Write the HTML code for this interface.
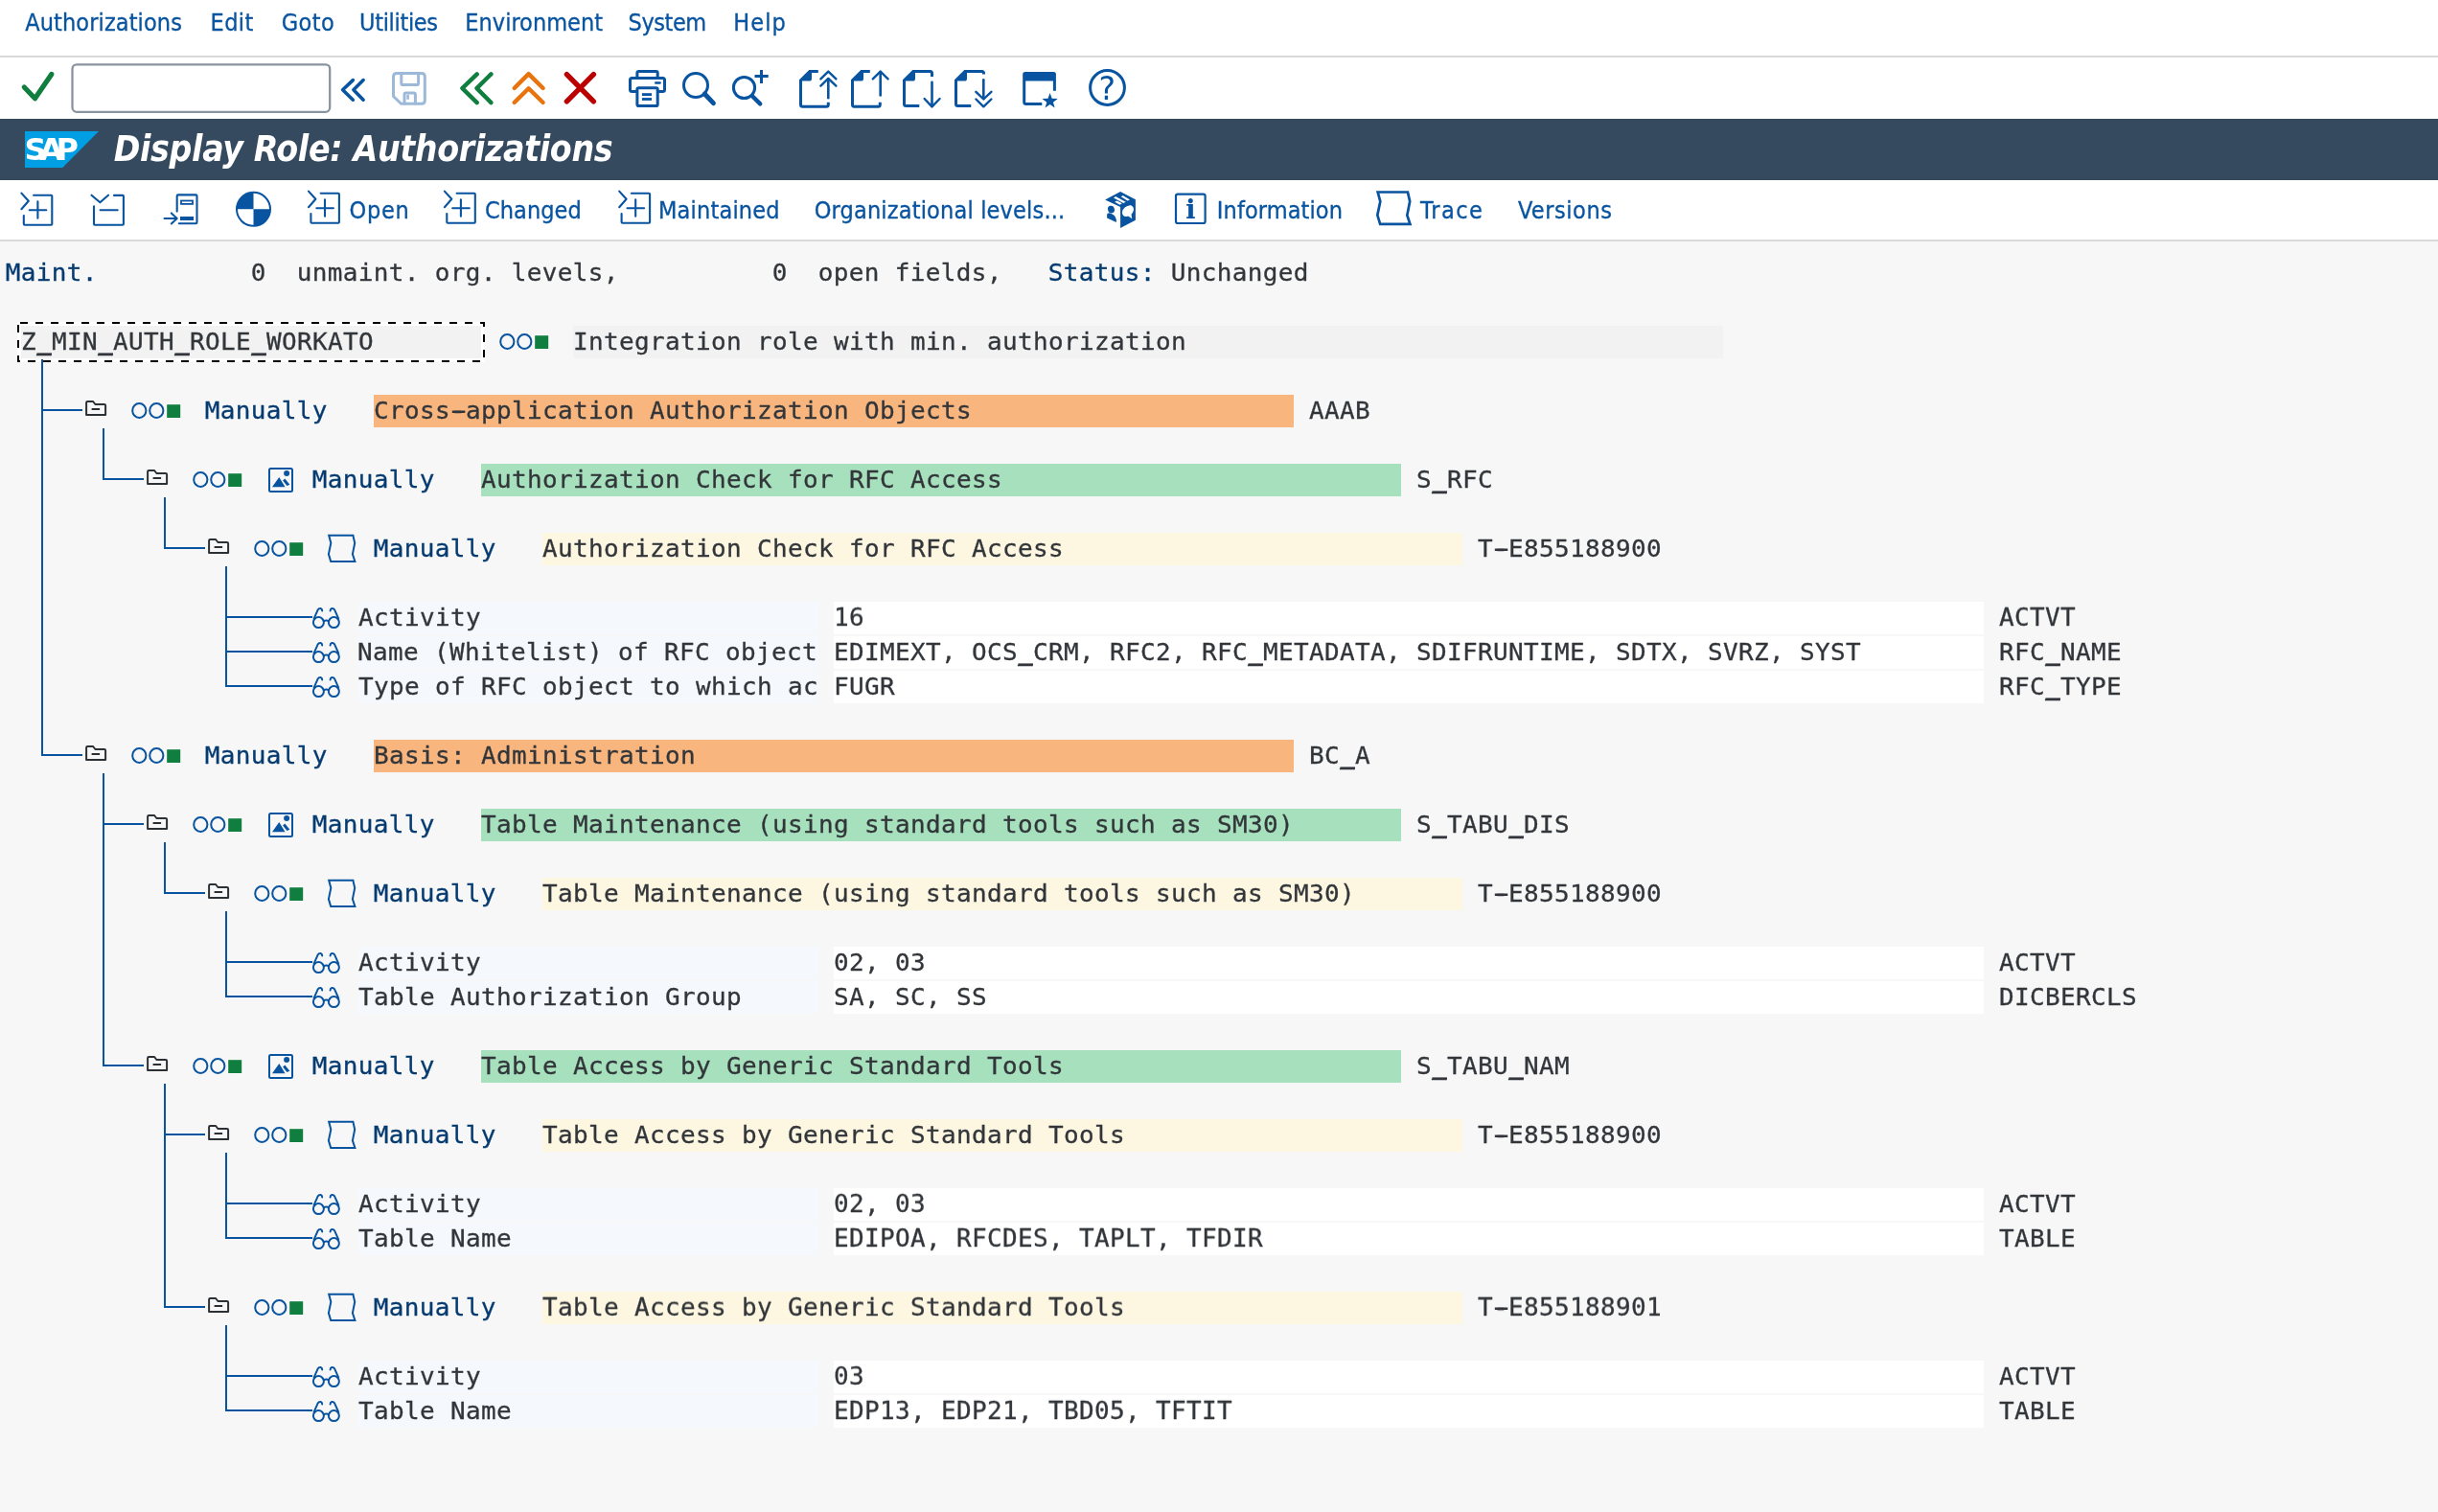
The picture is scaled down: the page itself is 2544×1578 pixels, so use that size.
<!DOCTYPE html>
<html lang="en"><head><meta charset="utf-8"><title>Display Role: Authorizations</title>
<style>
html,body{margin:0;padding:0}
body{width:2544px;height:1578px;overflow:hidden;background:#f7f7f7;position:relative;
 font-family:"DejaVu Sans Condensed","DejaVu Sans","Liberation Sans",sans-serif;}
.abs{position:absolute}
.ui{position:absolute;font-size:25px;line-height:30px;color:#0854a0;white-space:pre;-webkit-text-stroke:0.3px #0854a0}
.m{position:absolute;font-family:"DejaVu Sans Mono","Liberation Mono",monospace;font-size:26px;line-height:36px;height:36px;color:#32363a;white-space:pre;letter-spacing:0.3467px;transform-origin:0 27.2px;transform:translateY(-1px) scaleY(0.96);-webkit-text-stroke:0.3px}
.us{font-weight:bold;position:relative;top:-0.7px}
.hy{display:inline-block;transform:translate(0.4px,-0.9px) scale(1.92,1)}
.nv{color:#053b70}
.f{position:absolute;height:34px}
.ln{position:absolute;background:#0854a0}
svg{position:absolute;overflow:visible}
</style></head><body><div id="app" style="position:absolute;left:0;top:0;width:2544px;height:1578px;will-change:transform">

<div class="abs" style="left:0;top:0;width:2544px;height:58px;background:#fff"></div>
<div class="abs" style="left:0;top:58px;width:2544px;height:2px;background:#d9d9d9"></div>
<div class="ui" style="left:26.2px;top:9px;letter-spacing:0.108px">Authorizations</div>
<div class="ui" style="left:219.5px;top:9px;letter-spacing:0.433px">Edit</div>
<div class="ui" style="left:293.7px;top:9px;letter-spacing:0.467px">Goto</div>
<div class="ui" style="left:375px;top:9px;letter-spacing:-0.325px">Utilities</div>
<div class="ui" style="left:485.3px;top:9px;letter-spacing:0.02px">Environment</div>
<div class="ui" style="left:655.6px;top:9px;letter-spacing:-0.44px">System</div>
<div class="ui" style="left:765.3px;top:9px;letter-spacing:1.067px">Help</div>
<div class="abs" style="left:0;top:60px;width:2544px;height:64px;background:#fff"></div>
<svg style="left:70px;top:62px" width="280" height="60" viewBox="70 62 280 60"><rect x="75.5" y="67.3" width="268.7" height="49.5" rx="4.5" fill="#fff" stroke="#8a94a0" stroke-width="2.3"/></svg>
<svg style="left:0;top:60px" width="1300" height="64" viewBox="0 60 1300 64"><path d="M25.3 91 L36.5 102.8 L53.8 77.5" fill="none" stroke="#107e3e" stroke-width="5.2" stroke-linecap="round" stroke-linejoin="round"/><path d="M368.3 83.6 L357.6 93.8 L368.3 104.2 M379.1 83.6 L368.9 93.8 L379.1 104.2" fill="none" stroke="#0854a0" stroke-width="3.6" stroke-linecap="round" stroke-linejoin="round"/><path d="M414 76.5 H440 Q443.3 76.5 443.3 79.8 V105 Q443.3 108.3 440 108.3 H418.5 L410.5 100.5 V80 Q410.5 76.5 414 76.5 Z" fill="none" stroke="#9db9da" stroke-width="3" stroke-linecap="round" stroke-linejoin="round"/><path d="M418.8 77 V87 Q418.8 88.6 420.4 88.6 H435 Q436.6 88.6 436.6 87 V77" fill="none" stroke="#9db9da" stroke-width="3" stroke-linecap="round" stroke-linejoin="round"/><path d="M422 108 V98.5 Q422 96.9 423.6 96.9 H431.8 Q433.4 96.9 433.4 98.5 V108" fill="none" stroke="#9db9da" stroke-width="3" stroke-linecap="round" stroke-linejoin="round"/><rect x="424.3" y="98.8" width="2.6" height="5" fill="#9db9da"/><path d="M497.7 77.4 L482.4 92.1 L497.7 107.1 M512.4 77.4 L497.5 92.1 L512.4 107.1" fill="none" stroke="#107e3e" stroke-width="4.4" stroke-linecap="round" stroke-linejoin="round"/><path d="M536.7 92 L551.6 77.1 L566.6 92 M536.7 107 L551.6 92.3 L566.6 107" fill="none" stroke="#e9730c" stroke-width="4.4" stroke-linecap="round" stroke-linejoin="round"/><path d="M591.4 77.6 L619.4 105.9 M619.4 77.6 L591.4 105.9" fill="none" stroke="#bb0000" stroke-width="5.4" stroke-linecap="round" stroke-linejoin="round"/><path d="M664.9 80 V76 Q664.9 74.4 666.5 74.4 H684.6 Q686.2 74.4 686.2 76 V80" fill="none" stroke="#0854a0" stroke-width="3" stroke-linecap="round" stroke-linejoin="round"/><path d="M663.4 95.5 H659.5 Q657.5 95.5 657.5 93.5 V83.5 Q657.5 81.5 659.5 81.5 H691.5 Q693.5 81.5 693.5 83.5 V93.5 Q693.5 95.5 691.5 95.5 H687.7" fill="none" stroke="#0854a0" stroke-width="3" stroke-linecap="round" stroke-linejoin="round"/><path d="M666.5 91.7 H684.6 Q686.2 91.7 686.2 93.3 V108.9 Q686.2 110.5 684.6 110.5 H666.5 Q664.9 110.5 664.9 108.9 V93.3 Q664.9 91.7 666.5 91.7 Z" fill="none" stroke="#0854a0" stroke-width="3" stroke-linecap="round" stroke-linejoin="round"/><rect x="669.9" y="97.2" width="10.1" height="2.8" fill="#0854a0"/><rect x="669.9" y="102.1" width="10.1" height="2.8" fill="#0854a0"/><rect x="683" y="85.2" width="6.8" height="2.5" rx="1.2" fill="#0854a0"/><circle cx="726" cy="89" r="12.5" fill="none" stroke="#0854a0" stroke-width="3"/><path d="M735.3 98 L744.4 107.6" fill="none" stroke="#0854a0" stroke-width="5" stroke-linecap="round" stroke-linejoin="round"/><circle cx="776.5" cy="91.5" r="11.1" fill="none" stroke="#0854a0" stroke-width="3"/><path d="M785 100.2 L793.2 108.4" fill="none" stroke="#0854a0" stroke-width="4.4" stroke-linecap="round" stroke-linejoin="round"/><path d="M787.5 79.5 H801.7 M794.5 73 V86.9" fill="none" stroke="#0854a0" stroke-width="3" stroke-linecap="butt" stroke-linejoin="round"/><path d="M834 83.3 L844.3 72.9 H847 V82 Q847 84.6 844.4 84.6 H834 Z" fill="#0854a0"/><path d="M844 74.4 H853.8 M835.5 83 V109.3 Q835.5 111.3 837.5 111.3 H862.3 Q864.3 111.3 864.3 109.3 V106.8" fill="none" stroke="#0854a0" stroke-width="3" stroke-linecap="butt" stroke-linejoin="round"/><path d="M864.3 82.5 V102.2" fill="none" stroke="#0854a0" stroke-width="2.6" stroke-linecap="round" stroke-linejoin="round"/><path d="M856.4 82.4 L864.3 74.6 L872.4 82.4 M856.4 89.7 L864.3 81.9 L872.4 89.7" fill="none" stroke="#0854a0" stroke-width="2.4" stroke-linecap="round" stroke-linejoin="round"/><path d="M888 83.3 L898.3 72.9 H901 V82 Q901 84.6 898.4 84.6 H888 Z" fill="#0854a0"/><path d="M898 74.4 H907.8 M889.5 83 V109.3 Q889.5 111.3 891.5 111.3 H916.3 Q918.3 111.3 918.3 109.3 V106.8" fill="none" stroke="#0854a0" stroke-width="3" stroke-linecap="butt" stroke-linejoin="round"/><path d="M918.7 75 V99.5" fill="none" stroke="#0854a0" stroke-width="2.6" stroke-linecap="round" stroke-linejoin="round"/><path d="M910.8 82.4 L918.7 74.6 L926.6 82.4" fill="none" stroke="#0854a0" stroke-width="2.4" stroke-linecap="round" stroke-linejoin="round"/><path d="M942 83.3 L952.3 72.9 H955 V82 Q955 84.6 952.4 84.6 H942 Z" fill="#0854a0"/><path d="M952 74.4 H970.5 Q972.5 74.4 972.5 76.4 V80" fill="none" stroke="#0854a0" stroke-width="3" stroke-linecap="butt" stroke-linejoin="round"/><path d="M943.5 83 V108.5 Q943.5 110.5 945.5 110.5 H959.3" fill="none" stroke="#0854a0" stroke-width="3" stroke-linecap="butt" stroke-linejoin="round"/><path d="M972.5 85.8 V111" fill="none" stroke="#0854a0" stroke-width="2.6" stroke-linecap="round" stroke-linejoin="round"/><path d="M964.6 103 L972.5 111.3 L980.6 103" fill="none" stroke="#0854a0" stroke-width="2.4" stroke-linecap="round" stroke-linejoin="round"/><path d="M996 83.3 L1006.3 72.9 H1009 V82 Q1009 84.6 1006.4 84.6 H996 Z" fill="#0854a0"/><path d="M1006 74.4 H1024.5 Q1026.5 74.4 1026.5 76.4 V77.6" fill="none" stroke="#0854a0" stroke-width="3" stroke-linecap="butt" stroke-linejoin="round"/><path d="M997.5 83 V108.5 Q997.5 110.5 999.5 110.5 H1013.3" fill="none" stroke="#0854a0" stroke-width="3" stroke-linecap="butt" stroke-linejoin="round"/><path d="M1026.3 83.3 V103" fill="none" stroke="#0854a0" stroke-width="2.6" stroke-linecap="round" stroke-linejoin="round"/><path d="M1018.4 95.8 L1026.3 103.5 L1034.4 95.8 M1018.4 103.5 L1026.3 111.3 L1034.4 103.5" fill="none" stroke="#0854a0" stroke-width="2.4" stroke-linecap="round" stroke-linejoin="round"/><path d="M1067.2 77.5 Q1067.2 75 1069.7 75 H1099.4 Q1101.9 75 1101.9 77.5 V84.5 H1067.2 Z" fill="#0854a0"/><path d="M1068.7 84 V106.4 Q1068.7 108.4 1070.7 108.4 H1087.3 M1100.4 84 V94.8" fill="none" stroke="#0854a0" stroke-width="3" stroke-linecap="butt" stroke-linejoin="round"/><polygon points="1095.60,97.00 1097.66,102.77 1103.78,102.94 1098.93,106.68 1100.65,112.56 1095.60,109.10 1090.55,112.56 1092.27,106.68 1087.42,102.94 1093.54,102.77" fill="#0854a0"/><circle cx="1155.5" cy="91.5" r="17.9" fill="none" stroke="#0854a0" stroke-width="3"/><text x="1155.3" y="103.6" text-anchor="middle" font-family="DejaVu Sans,Liberation Sans,sans-serif" font-size="33" fill="#0854a0">?</text></svg>
<div class="abs" style="left:0;top:124px;width:2544px;height:64px;background:#354a5f"></div>
<svg style="left:26px;top:137px" width="78" height="38" viewBox="0 0 78 38"><polygon points="0,0 77,0 39.3,38 0,38" fill="#009fe3"/><text x="-0.6" y="29.9" font-family="DejaVu Sans,Liberation Sans,sans-serif" font-weight="bold" font-size="32" fill="#fff" letter-spacing="-7.3">SAP</text></svg>
<div class="abs" style="left:118.7px;top:124px;height:64px;line-height:63px;font-size:37px;font-weight:bold;font-style:italic;color:#fff;white-space:pre;letter-spacing:-0.32px">Display Role: Authorizations</div>
<div class="abs" style="left:0;top:188px;width:2544px;height:62px;background:#fff"></div>
<div class="abs" style="left:0;top:250px;width:2544px;height:2px;background:#d9d9d9"></div>
<svg style="left:0;top:187px" width="1700" height="63" viewBox="0 187 1700 63"><path d="M22.4 201.6 L29.8 209.8 L22.4 218.2" fill="none" stroke="#0854a0" stroke-width="2.1" stroke-linecap="round" stroke-linejoin="round"/><path d="M35.1 203.7 H53.3 Q54.3 203.7 54.3 204.7 V233.8 Q54.3 234.8 53.3 234.8 H25.8 Q24.8 234.8 24.8 233.8 V225" fill="none" stroke="#0854a0" stroke-width="2.1" stroke-linecap="round" stroke-linejoin="round"/><path d="M30.7 219.2 H48.3 M39.4 210.2 V227.8" fill="none" stroke="#0854a0" stroke-width="2.1" stroke-linecap="round" stroke-linejoin="round"/><path d="M95.5 203.7 L104.4 211.3 L113 203.7" fill="none" stroke="#0854a0" stroke-width="2.1" stroke-linecap="round" stroke-linejoin="round"/><path d="M119 203.9 H127.9 Q128.9 203.9 128.9 204.9 V233.8 Q128.9 234.8 127.9 234.8 H99 Q98 234.8 98 233.8 V215.4" fill="none" stroke="#0854a0" stroke-width="2.1" stroke-linecap="round" stroke-linejoin="round"/><path d="M104.6 219.2 H122.7" fill="none" stroke="#0854a0" stroke-width="2.1" stroke-linecap="round" stroke-linejoin="round"/><path d="M184.7 220.6 V204.6 Q184.7 203.4 185.9 203.4 H204.3 Q205.5 203.4 205.5 204.6 V232.1 Q205.5 233.3 204.3 233.3 H186.8" fill="none" stroke="#0854a0" stroke-width="2.1" stroke-linecap="round" stroke-linejoin="round"/><rect x="189" y="209.5" width="12" height="3.4" fill="none" stroke="#0854a0" stroke-width="1.8"/><rect x="188" y="226" width="14" height="4" fill="#0854a0"/><path d="M171.5 227.9 H184 M178.8 222.4 L184.7 227.9 L178.8 233.5" fill="none" stroke="#0854a0" stroke-width="2" stroke-linecap="round" stroke-linejoin="round"/><circle cx="264.5" cy="218.3" r="17.5" fill="#fff" stroke="#0854a0" stroke-width="2"/><path d="M264.5 218.3 V200.8 A17.5 17.5 0 0 0 247 218.3 Z M264.5 218.3 V235.8 A17.5 17.5 0 0 0 282 218.3 Z" fill="#0854a0"/><path d="M322.0 199.6 L329.40000000000003 207.8 L322.0 216.2" fill="none" stroke="#0854a0" stroke-width="2.1" stroke-linecap="round" stroke-linejoin="round"/><path d="M334.70000000000005 201.7 H352.90000000000003 Q353.90000000000003 201.7 353.90000000000003 202.7 V231.8 Q353.90000000000003 232.8 352.90000000000003 232.8 H325.40000000000003 Q324.40000000000003 232.8 324.40000000000003 231.8 V223" fill="none" stroke="#0854a0" stroke-width="2.1" stroke-linecap="round" stroke-linejoin="round"/><path d="M330.3 217.2 H347.90000000000003 M339.0 208.2 V225.8" fill="none" stroke="#0854a0" stroke-width="2.1" stroke-linecap="round" stroke-linejoin="round"/><path d="M463.9 199.6 L471.3 207.8 L463.9 216.2" fill="none" stroke="#0854a0" stroke-width="2.1" stroke-linecap="round" stroke-linejoin="round"/><path d="M476.6 201.7 H494.8 Q495.8 201.7 495.8 202.7 V231.8 Q495.8 232.8 494.8 232.8 H467.3 Q466.3 232.8 466.3 231.8 V223" fill="none" stroke="#0854a0" stroke-width="2.1" stroke-linecap="round" stroke-linejoin="round"/><path d="M472.2 217.2 H489.8 M480.9 208.2 V225.8" fill="none" stroke="#0854a0" stroke-width="2.1" stroke-linecap="round" stroke-linejoin="round"/><path d="M646.1999999999999 199.6 L653.5999999999999 207.8 L646.1999999999999 216.2" fill="none" stroke="#0854a0" stroke-width="2.1" stroke-linecap="round" stroke-linejoin="round"/><path d="M658.9 201.7 H677.0999999999999 Q678.0999999999999 201.7 678.0999999999999 202.7 V231.8 Q678.0999999999999 232.8 677.0999999999999 232.8 H649.5999999999999 Q648.5999999999999 232.8 648.5999999999999 231.8 V223" fill="none" stroke="#0854a0" stroke-width="2.1" stroke-linecap="round" stroke-linejoin="round"/><path d="M654.5 217.2 H672.0999999999999 M663.1999999999999 208.2 V225.8" fill="none" stroke="#0854a0" stroke-width="2.1" stroke-linecap="round" stroke-linejoin="round"/><polygon points="1153.1,208.5 1169.1,200.1 1184.9,208.2 1184.9,229.8 1169.1,238.1 1169.1,216.1" fill="#0854a0"/><polygon points="1171.8,203.9 1179,208.5 1176.6,209.6 1169.7,205.2" fill="#fff"/><polygon points="1164.1,205.1 1174.7,210.7 1172.3,211.9 1162,206.6" fill="#fff"/><polygon points="1165.6,209.5 1170.8,212.3 1168.5,213.8 1163.2,210.7" fill="#fff"/><ellipse cx="1177" cy="220.2" rx="6.8" ry="4.9" transform="rotate(-42 1177 220.2)" fill="#fff"/><polygon points="1177.2,225.6 1181.2,228.2 1180.3,222.6" fill="#fff"/><ellipse cx="1159.5" cy="218.6" rx="3.4" ry="3.9" transform="rotate(-15 1159.5 218.6)" fill="#0854a0"/><path d="M1155.1 224.2 Q1155.1 222.3 1157.3 222.3 L1160.2 223.3 Q1164.6 225.6 1164.9 230 V232.1 L1155.1 227.6 Z" fill="#0854a0"/><rect x="1227" y="202.6" width="30.6" height="30.4" rx="2" fill="none" stroke="#0854a0" stroke-width="2.2"/><text x="1242.3" y="228.3" text-anchor="middle" font-family="DejaVu Serif,Liberation Serif,serif" font-weight="bold" font-size="27" fill="#0854a0">i</text><path d="M1437.4 200.3 L1462.6 200.3 L1464.4 208.3 L1462.1 220.0 L1464.6 227.6 L1439.4 227.6 L1437.1 220.0 L1439.5 208.3 Z" fill="none" stroke="#0854a0" stroke-width="2.2" stroke-linecap="round" stroke-linejoin="miter" transform="translate(1436.2 199.3) scale(1.24 1.22) translate(-1436.2 -199.3)"/></svg>
<div class="ui" style="left:364.4px;top:205px;letter-spacing:0.8px">Open</div>
<div class="ui" style="left:505.9px;top:205px;letter-spacing:0.083px">Changed</div>
<div class="ui" style="left:687px;top:205px;letter-spacing:0.189px">Maintained</div>
<div class="ui" style="left:849.7px;top:205px;letter-spacing:0.17px">Organizational levels...</div>
<div class="ui" style="left:1269.8px;top:205px;letter-spacing:0.1px">Information</div>
<div class="ui" style="left:1481.9px;top:205px;letter-spacing:1.4px">Trace</div>
<div class="ui" style="left:1583.9px;top:205px;letter-spacing:0.543px">Versions</div>
<div class="m nv" style="left:5.8px;top:267px">Maint.</div>
<div class="m " style="left:261.8px;top:267px">0</div>
<div class="m " style="left:309.8px;top:267px">unmaint. org. levels,</div>
<div class="m " style="left:805.8px;top:267px">0</div>
<div class="m " style="left:853.8px;top:267px">open fields,</div>
<div class="m nv" style="left:1093.8px;top:267px">Status:</div>
<div class="m " style="left:1221.8px;top:267px">Unchanged</div>
<div class="abs" style="left:18px;top:336px;width:488px;height:42px;background:#fff"></div>
<div class="abs" style="left:22px;top:340px;width:480px;height:34px;background:#f2f2f2"></div>
<svg style="left:17px;top:335px" width="490" height="44" viewBox="17 335 490 44"><path d="M19 337 H505 V377" fill="none" stroke="#000" stroke-width="2" stroke-dasharray="8 8" stroke-dashoffset="14"/><path d="M19 337 V377 H505" fill="none" stroke="#000" stroke-width="2" stroke-dasharray="8 8" stroke-dashoffset="14"/></svg>
<div class="m " style="left:22.1px;top:339px">Z_MIN_AUTH_ROLE_WORKATO</div>
<div class="f" style="left:598px;top:340px;width:1200px;background:#f2f2f2"></div>
<div class="m " style="left:598.1px;top:339px">Integration role with min. authorization</div>
<div class="m nv" style="left:213.8px;top:411px">Manually</div>
<div class="f" style="left:390px;top:412px;width:960px;background:#f8b57d"></div>
<div class="m " style="left:390.1px;top:411px">Cross-application Authorization Objects</div>
<div class="m " style="left:1366.1px;top:411px">AAAB</div>
<div class="m nv" style="left:325.8px;top:483px">Manually</div>
<div class="f" style="left:502px;top:484px;width:960px;background:#a6e0bc"></div>
<div class="m " style="left:502.1px;top:483px">Authorization Check for RFC Access</div>
<div class="m " style="left:1478.1px;top:483px">S_RFC</div>
<div class="m nv" style="left:389.8px;top:555px">Manually</div>
<div class="f" style="left:566px;top:556px;width:960px;background:#fdf6e0"></div>
<div class="m " style="left:566.1px;top:555px">Authorization Check for RFC Access</div>
<div class="m " style="left:1542.1px;top:555px">T-E855188900</div>
<div class="f" style="left:374px;top:628px;width:480px;background:#f5f9fd"></div>
<div class="m " style="left:374.1px;top:627px">Activity</div>
<div class="f" style="left:870px;top:628px;width:1200px;background:#ffffff"></div>
<div class="m " style="left:870.1px;top:627px">16</div>
<div class="m " style="left:2086.1px;top:627px">ACTVT</div>
<div class="f" style="left:374px;top:664px;width:480px;background:#f5f9fd"></div>
<div class="m" style="left:373.1px;top:663px">Name (Whitelist) of RFC object</div>
<div class="f" style="left:870px;top:664px;width:1200px;background:#ffffff"></div>
<div class="m " style="left:870.1px;top:663px">EDIMEXT, OCS_CRM, RFC2, RFC_METADATA, SDIFRUNTIME, SDTX, SVRZ, SYST</div>
<div class="m " style="left:2086.1px;top:663px">RFC_NAME</div>
<div class="f" style="left:374px;top:700px;width:480px;background:#f5f9fd"></div>
<div class="m " style="left:374.1px;top:699px">Type of RFC object to which ac</div>
<div class="f" style="left:870px;top:700px;width:1200px;background:#ffffff"></div>
<div class="m " style="left:870.1px;top:699px">FUGR</div>
<div class="m " style="left:2086.1px;top:699px">RFC_TYPE</div>
<div class="m nv" style="left:213.8px;top:771px">Manually</div>
<div class="f" style="left:390px;top:772px;width:960px;background:#f8b57d"></div>
<div class="m " style="left:390.1px;top:771px">Basis: Administration</div>
<div class="m " style="left:1366.1px;top:771px">BC_A</div>
<div class="m nv" style="left:325.8px;top:843px">Manually</div>
<div class="f" style="left:502px;top:844px;width:960px;background:#a6e0bc"></div>
<div class="m " style="left:502.1px;top:843px">Table Maintenance (using standard tools such as SM30)</div>
<div class="m " style="left:1478.1px;top:843px">S_TABU_DIS</div>
<div class="m nv" style="left:389.8px;top:915px">Manually</div>
<div class="f" style="left:566px;top:916px;width:960px;background:#fdf6e0"></div>
<div class="m " style="left:566.1px;top:915px">Table Maintenance (using standard tools such as SM30)</div>
<div class="m " style="left:1542.1px;top:915px">T-E855188900</div>
<div class="f" style="left:374px;top:988px;width:480px;background:#f5f9fd"></div>
<div class="m " style="left:374.1px;top:987px">Activity</div>
<div class="f" style="left:870px;top:988px;width:1200px;background:#ffffff"></div>
<div class="m " style="left:870.1px;top:987px">02, 03</div>
<div class="m " style="left:2086.1px;top:987px">ACTVT</div>
<div class="f" style="left:374px;top:1024px;width:480px;background:#f5f9fd"></div>
<div class="m " style="left:374.1px;top:1023px">Table Authorization Group</div>
<div class="f" style="left:870px;top:1024px;width:1200px;background:#ffffff"></div>
<div class="m " style="left:870.1px;top:1023px">SA, SC, SS</div>
<div class="m " style="left:2086.1px;top:1023px">DICBERCLS</div>
<div class="m nv" style="left:325.8px;top:1095px">Manually</div>
<div class="f" style="left:502px;top:1096px;width:960px;background:#a6e0bc"></div>
<div class="m " style="left:502.1px;top:1095px">Table Access by Generic Standard Tools</div>
<div class="m " style="left:1478.1px;top:1095px">S_TABU_NAM</div>
<div class="m nv" style="left:389.8px;top:1167px">Manually</div>
<div class="f" style="left:566px;top:1168px;width:960px;background:#fdf6e0"></div>
<div class="m " style="left:566.1px;top:1167px">Table Access by Generic Standard Tools</div>
<div class="m " style="left:1542.1px;top:1167px">T-E855188900</div>
<div class="f" style="left:374px;top:1240px;width:480px;background:#f5f9fd"></div>
<div class="m " style="left:374.1px;top:1239px">Activity</div>
<div class="f" style="left:870px;top:1240px;width:1200px;background:#ffffff"></div>
<div class="m " style="left:870.1px;top:1239px">02, 03</div>
<div class="m " style="left:2086.1px;top:1239px">ACTVT</div>
<div class="f" style="left:374px;top:1276px;width:480px;background:#f5f9fd"></div>
<div class="m " style="left:374.1px;top:1275px">Table Name</div>
<div class="f" style="left:870px;top:1276px;width:1200px;background:#ffffff"></div>
<div class="m " style="left:870.1px;top:1275px">EDIPOA, RFCDES, TAPLT, TFDIR</div>
<div class="m " style="left:2086.1px;top:1275px">TABLE</div>
<div class="m nv" style="left:389.8px;top:1347px">Manually</div>
<div class="f" style="left:566px;top:1348px;width:960px;background:#fdf6e0"></div>
<div class="m " style="left:566.1px;top:1347px">Table Access by Generic Standard Tools</div>
<div class="m " style="left:1542.1px;top:1347px">T-E855188901</div>
<div class="f" style="left:374px;top:1420px;width:480px;background:#f5f9fd"></div>
<div class="m " style="left:374.1px;top:1419px">Activity</div>
<div class="f" style="left:870px;top:1420px;width:1200px;background:#ffffff"></div>
<div class="m " style="left:870.1px;top:1419px">03</div>
<div class="m " style="left:2086.1px;top:1419px">ACTVT</div>
<div class="f" style="left:374px;top:1456px;width:480px;background:#f5f9fd"></div>
<div class="m " style="left:374.1px;top:1455px">Table Name</div>
<div class="f" style="left:870px;top:1456px;width:1200px;background:#ffffff"></div>
<div class="m " style="left:870.1px;top:1455px">EDP13, EDP21, TBD05, TFTIT</div>
<div class="m " style="left:2086.1px;top:1455px">TABLE</div>
<div class="ln" style="left:235px;top:643px;width:91px;height:2px"></div>
<div class="ln" style="left:235px;top:679px;width:91px;height:2px"></div>
<div class="ln" style="left:235px;top:715px;width:91px;height:2px"></div>
<div class="ln" style="left:235px;top:1003px;width:91px;height:2px"></div>
<div class="ln" style="left:235px;top:1039px;width:91px;height:2px"></div>
<div class="ln" style="left:235px;top:1255px;width:91px;height:2px"></div>
<div class="ln" style="left:235px;top:1291px;width:91px;height:2px"></div>
<div class="ln" style="left:235px;top:1435px;width:91px;height:2px"></div>
<div class="ln" style="left:235px;top:1471px;width:91px;height:2px"></div>
<div class="ln" style="left:43px;top:375px;width:2px;height:414px"></div>
<div class="ln" style="left:43px;top:427px;width:43px;height:2px"></div>
<div class="ln" style="left:43px;top:787px;width:43px;height:2px"></div>
<div class="ln" style="left:107px;top:447px;width:2px;height:54px"></div>
<div class="ln" style="left:107px;top:499px;width:43px;height:2px"></div>
<div class="ln" style="left:171px;top:519px;width:2px;height:54px"></div>
<div class="ln" style="left:171px;top:571px;width:43px;height:2px"></div>
<div class="ln" style="left:235px;top:591px;width:2px;height:126px"></div>
<div class="ln" style="left:107px;top:807px;width:2px;height:306px"></div>
<div class="ln" style="left:107px;top:859px;width:43px;height:2px"></div>
<div class="ln" style="left:107px;top:1111px;width:43px;height:2px"></div>
<div class="ln" style="left:171px;top:879px;width:2px;height:54px"></div>
<div class="ln" style="left:171px;top:931px;width:43px;height:2px"></div>
<div class="ln" style="left:235px;top:951px;width:2px;height:90px"></div>
<div class="ln" style="left:171px;top:1131px;width:2px;height:234px"></div>
<div class="ln" style="left:171px;top:1183px;width:43px;height:2px"></div>
<div class="ln" style="left:171px;top:1363px;width:43px;height:2px"></div>
<div class="ln" style="left:235px;top:1203px;width:2px;height:90px"></div>
<div class="ln" style="left:235px;top:1383px;width:2px;height:90px"></div>
<svg style="left:0;top:252px" width="700" height="1326" viewBox="0 252 700 1326"><ellipse cx="529.3000000000001" cy="356.5" rx="7.1" ry="7.4" fill="none" stroke="#0854a0" stroke-width="2"/><ellipse cx="547.3000000000001" cy="356.5" rx="7.1" ry="7.4" fill="none" stroke="#0854a0" stroke-width="2"/><rect x="557.5" y="349.5" width="15.4" height="15.2" fill="#fbfbfb"/><rect x="558.2" y="350.2" width="14" height="13.8" fill="#107e3e"/><path d="M90.1 433 V420.2 Q90.1 419 91.3 419 H97.1 L99.39999999999999 422 H108.89999999999999 Q110.1 422 110.1 423.2 V433 Z" fill="none" stroke="#2b3035" stroke-width="2" stroke-linecap="round" stroke-linejoin="round"/><rect x="95.6" y="426" width="8.5" height="2" fill="#2b3035"/><ellipse cx="145.29999999999998" cy="428.5" rx="7.1" ry="7.4" fill="none" stroke="#0854a0" stroke-width="2"/><ellipse cx="163.29999999999998" cy="428.5" rx="7.1" ry="7.4" fill="none" stroke="#0854a0" stroke-width="2"/><rect x="173.5" y="421.5" width="15.4" height="15.2" fill="#fbfbfb"/><rect x="174.2" y="422.2" width="14" height="13.8" fill="#107e3e"/><path d="M154.1 505 V492.2 Q154.1 491 155.29999999999998 491 H161.1 L163.4 494 H172.9 Q174.1 494 174.1 495.2 V505 Z" fill="none" stroke="#2b3035" stroke-width="2" stroke-linecap="round" stroke-linejoin="round"/><rect x="159.6" y="498" width="8.5" height="2" fill="#2b3035"/><ellipse cx="209.29999999999998" cy="500.5" rx="7.1" ry="7.4" fill="none" stroke="#0854a0" stroke-width="2"/><ellipse cx="227.29999999999998" cy="500.5" rx="7.1" ry="7.4" fill="none" stroke="#0854a0" stroke-width="2"/><rect x="237.5" y="493.5" width="15.4" height="15.2" fill="#fbfbfb"/><rect x="238.2" y="494.2" width="14" height="13.8" fill="#107e3e"/><rect x="281.0" y="489" width="24" height="24" rx="1.5" fill="none" stroke="#0854a0" stroke-width="2"/><circle cx="299.1" cy="493.9" r="3" fill="#0854a0"/><polygon points="291.3,498 284.0,508.2 297.5,508.2" fill="#0854a0"/><polygon points="295.1,501.6 297.3,499.5 302.4,505.8 299.4,506.9" fill="#0854a0"/><path d="M218.1 577 V564.2 Q218.1 563 219.29999999999998 563 H225.1 L227.4 566 H236.9 Q238.1 566 238.1 567.2 V577 Z" fill="none" stroke="#2b3035" stroke-width="2" stroke-linecap="round" stroke-linejoin="round"/><rect x="223.6" y="570" width="8.5" height="2" fill="#2b3035"/><ellipse cx="273.3" cy="572.5" rx="7.1" ry="7.4" fill="none" stroke="#0854a0" stroke-width="2"/><ellipse cx="291.3" cy="572.5" rx="7.1" ry="7.4" fill="none" stroke="#0854a0" stroke-width="2"/><rect x="301.5" y="565.5" width="15.4" height="15.2" fill="#fbfbfb"/><rect x="302.20000000000005" y="566.2" width="14" height="13.8" fill="#107e3e"/><path d="M343.2 558.7 L368.4 558.7 L370.2 566.7 L367.9 578.4 L370.4 586.0 L345.2 586.0 L342.9 578.4 L345.3 566.7 Z" fill="none" stroke="#0854a0" stroke-width="2" stroke-linecap="round" stroke-linejoin="miter"/><circle cx="332.40000000000003" cy="649.6" r="5.5" fill="none" stroke="#0854a0" stroke-width="2"/><circle cx="348.40000000000003" cy="649.6" r="5.5" fill="none" stroke="#0854a0" stroke-width="2"/><path d="M337.8 648.2 Q340.40000000000003 647.0 343.0 648.2" fill="none" stroke="#0854a0" stroke-width="2" stroke-linecap="round" stroke-linejoin="round"/><path d="M327.6 645.6 L331.6 636.6 Q332.6 634.8 334.6 635 Q336.2 635.4 336.2 637.6" fill="none" stroke="#0854a0" stroke-width="2" stroke-linecap="round" stroke-linejoin="round"/><path d="M353.2 645.6 L349.2 636.6 Q348.2 634.8 346.2 635 Q344.6 635.4 344.6 637.6" fill="none" stroke="#0854a0" stroke-width="2" stroke-linecap="round" stroke-linejoin="round"/><circle cx="332.40000000000003" cy="685.6" r="5.5" fill="none" stroke="#0854a0" stroke-width="2"/><circle cx="348.40000000000003" cy="685.6" r="5.5" fill="none" stroke="#0854a0" stroke-width="2"/><path d="M337.8 684.2 Q340.40000000000003 683.0 343.0 684.2" fill="none" stroke="#0854a0" stroke-width="2" stroke-linecap="round" stroke-linejoin="round"/><path d="M327.6 681.6 L331.6 672.6 Q332.6 670.8 334.6 671 Q336.2 671.4 336.2 673.6" fill="none" stroke="#0854a0" stroke-width="2" stroke-linecap="round" stroke-linejoin="round"/><path d="M353.2 681.6 L349.2 672.6 Q348.2 670.8 346.2 671 Q344.6 671.4 344.6 673.6" fill="none" stroke="#0854a0" stroke-width="2" stroke-linecap="round" stroke-linejoin="round"/><circle cx="332.40000000000003" cy="721.6" r="5.5" fill="none" stroke="#0854a0" stroke-width="2"/><circle cx="348.40000000000003" cy="721.6" r="5.5" fill="none" stroke="#0854a0" stroke-width="2"/><path d="M337.8 720.2 Q340.40000000000003 719.0 343.0 720.2" fill="none" stroke="#0854a0" stroke-width="2" stroke-linecap="round" stroke-linejoin="round"/><path d="M327.6 717.6 L331.6 708.6 Q332.6 706.8 334.6 707 Q336.2 707.4 336.2 709.6" fill="none" stroke="#0854a0" stroke-width="2" stroke-linecap="round" stroke-linejoin="round"/><path d="M353.2 717.6 L349.2 708.6 Q348.2 706.8 346.2 707 Q344.6 707.4 344.6 709.6" fill="none" stroke="#0854a0" stroke-width="2" stroke-linecap="round" stroke-linejoin="round"/><path d="M90.1 793 V780.2 Q90.1 779 91.3 779 H97.1 L99.39999999999999 782 H108.89999999999999 Q110.1 782 110.1 783.2 V793 Z" fill="none" stroke="#2b3035" stroke-width="2" stroke-linecap="round" stroke-linejoin="round"/><rect x="95.6" y="786" width="8.5" height="2" fill="#2b3035"/><ellipse cx="145.29999999999998" cy="788.5" rx="7.1" ry="7.4" fill="none" stroke="#0854a0" stroke-width="2"/><ellipse cx="163.29999999999998" cy="788.5" rx="7.1" ry="7.4" fill="none" stroke="#0854a0" stroke-width="2"/><rect x="173.5" y="781.5" width="15.4" height="15.2" fill="#fbfbfb"/><rect x="174.2" y="782.2" width="14" height="13.8" fill="#107e3e"/><path d="M154.1 865 V852.2 Q154.1 851 155.29999999999998 851 H161.1 L163.4 854 H172.9 Q174.1 854 174.1 855.2 V865 Z" fill="none" stroke="#2b3035" stroke-width="2" stroke-linecap="round" stroke-linejoin="round"/><rect x="159.6" y="858" width="8.5" height="2" fill="#2b3035"/><ellipse cx="209.29999999999998" cy="860.5" rx="7.1" ry="7.4" fill="none" stroke="#0854a0" stroke-width="2"/><ellipse cx="227.29999999999998" cy="860.5" rx="7.1" ry="7.4" fill="none" stroke="#0854a0" stroke-width="2"/><rect x="237.5" y="853.5" width="15.4" height="15.2" fill="#fbfbfb"/><rect x="238.2" y="854.2" width="14" height="13.8" fill="#107e3e"/><rect x="281.0" y="849" width="24" height="24" rx="1.5" fill="none" stroke="#0854a0" stroke-width="2"/><circle cx="299.1" cy="853.9" r="3" fill="#0854a0"/><polygon points="291.3,858 284.0,868.2 297.5,868.2" fill="#0854a0"/><polygon points="295.1,861.6 297.3,859.5 302.4,865.8 299.4,866.9" fill="#0854a0"/><path d="M218.1 937 V924.2 Q218.1 923 219.29999999999998 923 H225.1 L227.4 926 H236.9 Q238.1 926 238.1 927.2 V937 Z" fill="none" stroke="#2b3035" stroke-width="2" stroke-linecap="round" stroke-linejoin="round"/><rect x="223.6" y="930" width="8.5" height="2" fill="#2b3035"/><ellipse cx="273.3" cy="932.5" rx="7.1" ry="7.4" fill="none" stroke="#0854a0" stroke-width="2"/><ellipse cx="291.3" cy="932.5" rx="7.1" ry="7.4" fill="none" stroke="#0854a0" stroke-width="2"/><rect x="301.5" y="925.5" width="15.4" height="15.2" fill="#fbfbfb"/><rect x="302.20000000000005" y="926.2" width="14" height="13.8" fill="#107e3e"/><path d="M343.2 918.7 L368.4 918.7 L370.2 926.7 L367.9 938.4 L370.4 946.0 L345.2 946.0 L342.9 938.4 L345.3 926.7 Z" fill="none" stroke="#0854a0" stroke-width="2" stroke-linecap="round" stroke-linejoin="miter"/><circle cx="332.40000000000003" cy="1009.6" r="5.5" fill="none" stroke="#0854a0" stroke-width="2"/><circle cx="348.40000000000003" cy="1009.6" r="5.5" fill="none" stroke="#0854a0" stroke-width="2"/><path d="M337.8 1008.2 Q340.40000000000003 1007.0 343.0 1008.2" fill="none" stroke="#0854a0" stroke-width="2" stroke-linecap="round" stroke-linejoin="round"/><path d="M327.6 1005.6 L331.6 996.6 Q332.6 994.8 334.6 995 Q336.2 995.4 336.2 997.6" fill="none" stroke="#0854a0" stroke-width="2" stroke-linecap="round" stroke-linejoin="round"/><path d="M353.2 1005.6 L349.2 996.6 Q348.2 994.8 346.2 995 Q344.6 995.4 344.6 997.6" fill="none" stroke="#0854a0" stroke-width="2" stroke-linecap="round" stroke-linejoin="round"/><circle cx="332.40000000000003" cy="1045.6" r="5.5" fill="none" stroke="#0854a0" stroke-width="2"/><circle cx="348.40000000000003" cy="1045.6" r="5.5" fill="none" stroke="#0854a0" stroke-width="2"/><path d="M337.8 1044.1999999999998 Q340.40000000000003 1043.0 343.0 1044.1999999999998" fill="none" stroke="#0854a0" stroke-width="2" stroke-linecap="round" stroke-linejoin="round"/><path d="M327.6 1041.6 L331.6 1032.6 Q332.6 1030.8 334.6 1031 Q336.2 1031.4 336.2 1033.6" fill="none" stroke="#0854a0" stroke-width="2" stroke-linecap="round" stroke-linejoin="round"/><path d="M353.2 1041.6 L349.2 1032.6 Q348.2 1030.8 346.2 1031 Q344.6 1031.4 344.6 1033.6" fill="none" stroke="#0854a0" stroke-width="2" stroke-linecap="round" stroke-linejoin="round"/><path d="M154.1 1117 V1104.2 Q154.1 1103 155.29999999999998 1103 H161.1 L163.4 1106 H172.9 Q174.1 1106 174.1 1107.2 V1117 Z" fill="none" stroke="#2b3035" stroke-width="2" stroke-linecap="round" stroke-linejoin="round"/><rect x="159.6" y="1110" width="8.5" height="2" fill="#2b3035"/><ellipse cx="209.29999999999998" cy="1112.5" rx="7.1" ry="7.4" fill="none" stroke="#0854a0" stroke-width="2"/><ellipse cx="227.29999999999998" cy="1112.5" rx="7.1" ry="7.4" fill="none" stroke="#0854a0" stroke-width="2"/><rect x="237.5" y="1105.5" width="15.4" height="15.2" fill="#fbfbfb"/><rect x="238.2" y="1106.2" width="14" height="13.8" fill="#107e3e"/><rect x="281.0" y="1101" width="24" height="24" rx="1.5" fill="none" stroke="#0854a0" stroke-width="2"/><circle cx="299.1" cy="1105.9" r="3" fill="#0854a0"/><polygon points="291.3,1110 284.0,1120.2 297.5,1120.2" fill="#0854a0"/><polygon points="295.1,1113.6 297.3,1111.5 302.4,1117.8 299.4,1118.9" fill="#0854a0"/><path d="M218.1 1189 V1176.2 Q218.1 1175 219.29999999999998 1175 H225.1 L227.4 1178 H236.9 Q238.1 1178 238.1 1179.2 V1189 Z" fill="none" stroke="#2b3035" stroke-width="2" stroke-linecap="round" stroke-linejoin="round"/><rect x="223.6" y="1182" width="8.5" height="2" fill="#2b3035"/><ellipse cx="273.3" cy="1184.5" rx="7.1" ry="7.4" fill="none" stroke="#0854a0" stroke-width="2"/><ellipse cx="291.3" cy="1184.5" rx="7.1" ry="7.4" fill="none" stroke="#0854a0" stroke-width="2"/><rect x="301.5" y="1177.5" width="15.4" height="15.2" fill="#fbfbfb"/><rect x="302.20000000000005" y="1178.2" width="14" height="13.8" fill="#107e3e"/><path d="M343.2 1170.7 L368.4 1170.7 L370.2 1178.7 L367.9 1190.4 L370.4 1198.0 L345.2 1198.0 L342.9 1190.4 L345.3 1178.7 Z" fill="none" stroke="#0854a0" stroke-width="2" stroke-linecap="round" stroke-linejoin="miter"/><circle cx="332.40000000000003" cy="1261.6" r="5.5" fill="none" stroke="#0854a0" stroke-width="2"/><circle cx="348.40000000000003" cy="1261.6" r="5.5" fill="none" stroke="#0854a0" stroke-width="2"/><path d="M337.8 1260.1999999999998 Q340.40000000000003 1259.0 343.0 1260.1999999999998" fill="none" stroke="#0854a0" stroke-width="2" stroke-linecap="round" stroke-linejoin="round"/><path d="M327.6 1257.6 L331.6 1248.6 Q332.6 1246.8 334.6 1247 Q336.2 1247.4 336.2 1249.6" fill="none" stroke="#0854a0" stroke-width="2" stroke-linecap="round" stroke-linejoin="round"/><path d="M353.2 1257.6 L349.2 1248.6 Q348.2 1246.8 346.2 1247 Q344.6 1247.4 344.6 1249.6" fill="none" stroke="#0854a0" stroke-width="2" stroke-linecap="round" stroke-linejoin="round"/><circle cx="332.40000000000003" cy="1297.6" r="5.5" fill="none" stroke="#0854a0" stroke-width="2"/><circle cx="348.40000000000003" cy="1297.6" r="5.5" fill="none" stroke="#0854a0" stroke-width="2"/><path d="M337.8 1296.1999999999998 Q340.40000000000003 1295.0 343.0 1296.1999999999998" fill="none" stroke="#0854a0" stroke-width="2" stroke-linecap="round" stroke-linejoin="round"/><path d="M327.6 1293.6 L331.6 1284.6 Q332.6 1282.8 334.6 1283 Q336.2 1283.4 336.2 1285.6" fill="none" stroke="#0854a0" stroke-width="2" stroke-linecap="round" stroke-linejoin="round"/><path d="M353.2 1293.6 L349.2 1284.6 Q348.2 1282.8 346.2 1283 Q344.6 1283.4 344.6 1285.6" fill="none" stroke="#0854a0" stroke-width="2" stroke-linecap="round" stroke-linejoin="round"/><path d="M218.1 1369 V1356.2 Q218.1 1355 219.29999999999998 1355 H225.1 L227.4 1358 H236.9 Q238.1 1358 238.1 1359.2 V1369 Z" fill="none" stroke="#2b3035" stroke-width="2" stroke-linecap="round" stroke-linejoin="round"/><rect x="223.6" y="1362" width="8.5" height="2" fill="#2b3035"/><ellipse cx="273.3" cy="1364.5" rx="7.1" ry="7.4" fill="none" stroke="#0854a0" stroke-width="2"/><ellipse cx="291.3" cy="1364.5" rx="7.1" ry="7.4" fill="none" stroke="#0854a0" stroke-width="2"/><rect x="301.5" y="1357.5" width="15.4" height="15.2" fill="#fbfbfb"/><rect x="302.20000000000005" y="1358.2" width="14" height="13.8" fill="#107e3e"/><path d="M343.2 1350.7 L368.4 1350.7 L370.2 1358.7 L367.9 1370.4 L370.4 1378.0 L345.2 1378.0 L342.9 1370.4 L345.3 1358.7 Z" fill="none" stroke="#0854a0" stroke-width="2" stroke-linecap="round" stroke-linejoin="miter"/><circle cx="332.40000000000003" cy="1441.6" r="5.5" fill="none" stroke="#0854a0" stroke-width="2"/><circle cx="348.40000000000003" cy="1441.6" r="5.5" fill="none" stroke="#0854a0" stroke-width="2"/><path d="M337.8 1440.1999999999998 Q340.40000000000003 1439.0 343.0 1440.1999999999998" fill="none" stroke="#0854a0" stroke-width="2" stroke-linecap="round" stroke-linejoin="round"/><path d="M327.6 1437.6 L331.6 1428.6 Q332.6 1426.8 334.6 1427 Q336.2 1427.4 336.2 1429.6" fill="none" stroke="#0854a0" stroke-width="2" stroke-linecap="round" stroke-linejoin="round"/><path d="M353.2 1437.6 L349.2 1428.6 Q348.2 1426.8 346.2 1427 Q344.6 1427.4 344.6 1429.6" fill="none" stroke="#0854a0" stroke-width="2" stroke-linecap="round" stroke-linejoin="round"/><circle cx="332.40000000000003" cy="1477.6" r="5.5" fill="none" stroke="#0854a0" stroke-width="2"/><circle cx="348.40000000000003" cy="1477.6" r="5.5" fill="none" stroke="#0854a0" stroke-width="2"/><path d="M337.8 1476.1999999999998 Q340.40000000000003 1475.0 343.0 1476.1999999999998" fill="none" stroke="#0854a0" stroke-width="2" stroke-linecap="round" stroke-linejoin="round"/><path d="M327.6 1473.6 L331.6 1464.6 Q332.6 1462.8 334.6 1463 Q336.2 1463.4 336.2 1465.6" fill="none" stroke="#0854a0" stroke-width="2" stroke-linecap="round" stroke-linejoin="round"/><path d="M353.2 1473.6 L349.2 1464.6 Q348.2 1462.8 346.2 1463 Q344.6 1463.4 344.6 1465.6" fill="none" stroke="#0854a0" stroke-width="2" stroke-linecap="round" stroke-linejoin="round"/></svg>
<svg style="left:0;top:252px" width="2544" height="1326" viewBox="0 252 2544 1326"><rect x="38.4" y="368.4" width="15.6" height="1.7" fill="#32363a"/><rect x="102.4" y="368.4" width="15.6" height="1.7" fill="#32363a"/><rect x="182.4" y="368.4" width="15.6" height="1.7" fill="#32363a"/><rect x="262.4" y="368.4" width="15.6" height="1.7" fill="#32363a"/><rect x="471.8" y="428.5" width="13.5" height="2.5" fill="#32363a"/><rect x="1494.4" y="512.4" width="15.6" height="1.7" fill="#32363a"/><rect x="1559.8" y="572.5" width="13.5" height="2.5" fill="#32363a"/><rect x="1062.4" y="692.4" width="15.6" height="1.7" fill="#32363a"/><rect x="1302.4" y="692.4" width="15.6" height="1.7" fill="#32363a"/><rect x="2134.4" y="692.4" width="15.6" height="1.7" fill="#32363a"/><rect x="2134.4" y="728.4" width="15.6" height="1.7" fill="#32363a"/><rect x="1398.4" y="800.4" width="15.6" height="1.7" fill="#32363a"/><rect x="1494.4" y="872.4" width="15.6" height="1.7" fill="#32363a"/><rect x="1574.4" y="872.4" width="15.6" height="1.7" fill="#32363a"/><rect x="1559.8" y="932.5" width="13.5" height="2.5" fill="#32363a"/><rect x="1494.4" y="1124.4" width="15.6" height="1.7" fill="#32363a"/><rect x="1574.4" y="1124.4" width="15.6" height="1.7" fill="#32363a"/><rect x="1559.8" y="1184.5" width="13.5" height="2.5" fill="#32363a"/><rect x="1559.8" y="1364.5" width="13.5" height="2.5" fill="#32363a"/></svg>

</div></body></html>
